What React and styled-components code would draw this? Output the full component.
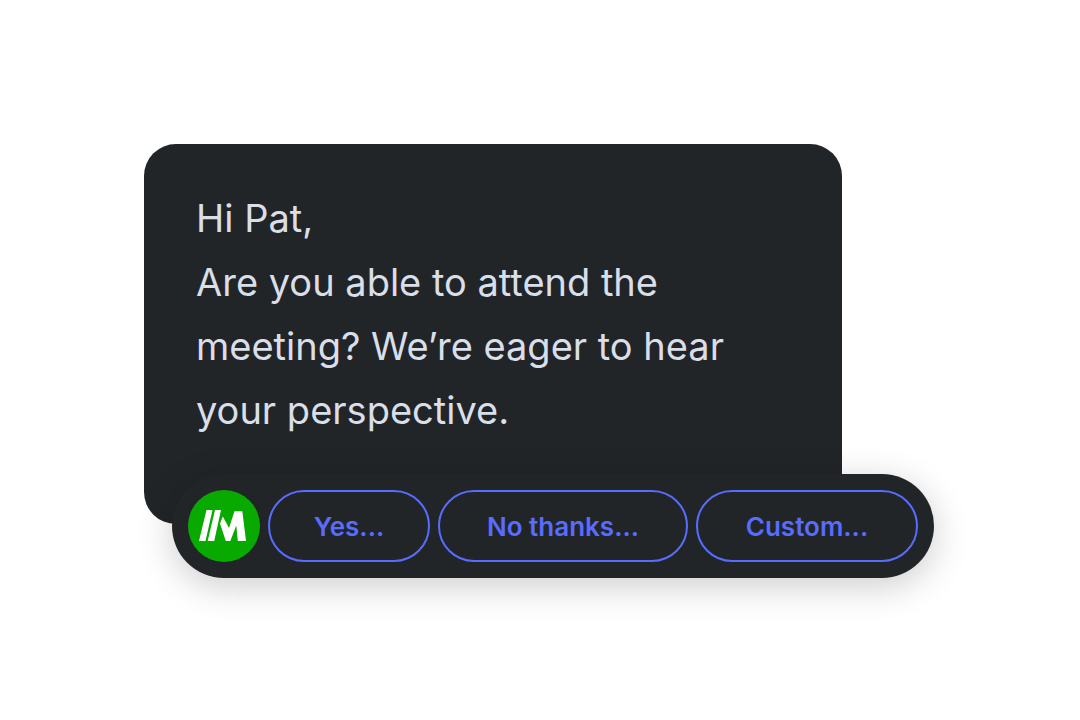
import React from 'react'
import styled, { createGlobalStyle } from 'styled-components'

const GlobalStyle = createGlobalStyle`
  * {
    box-sizing: border-box;
  }

  body {
    margin: 0;
    background: #ffffff;
    font-family: Inter, "Liberation Sans", sans-serif;
  }
`;

const Container = styled.main`
  padding: 144px;
`;

const Message = styled.section`
  min-height: 380px;
  margin-right: 94px;
  padding: 42px 52px;
  border-radius: 32px;
  background: #222528;
  color: #d9dfe9;
`;

const Paragraph = styled.p`
  margin: 0;
  font-size: 38px;
  font-weight: 400;
  line-height: 64px;
`;

const ReplyBar = styled.div`
  position: relative;
  display: flex;
  gap: 8px;
  margin: -50px 2px 0 28px;
  padding: 16px;
  border-radius: 52px;
  background: #222528;
  box-shadow: 0 8px 36px rgba(0, 0, 0, 0.2);
`;

const Logo = styled.svg`
  flex: none;
  width: 72px;
  height: 72px;
`;

const ReplyButton = styled.button`
  flex: ${(props) => props.$grow} 1 0;
  height: 72px;
  padding: 2px 0 0;
  border: 2px solid #586cff;
  border-radius: 36px;
  background: transparent;
  color: #586cff;
  font-family: inherit;
  font-size: 26px;
  font-weight: 600;
  line-height: 36px;
  white-space: nowrap;
  cursor: pointer;
`;

const replies = [
  { label: "Yes...", grow: 158 },
  { label: "No thanks...", grow: 246 },
  { label: "Custom...", grow: 218 },
];

const App = () => {
  return (
    <>
      <GlobalStyle/>
      <Container>
        <Message>
          <Paragraph>Hi Pat,</Paragraph>
          <Paragraph>
            Are you able to attend the meeting? We’re eager to hear your perspective.
          </Paragraph>
        </Message>
        <ReplyBar>
          <Logo viewBox="0 0 72 72" aria-hidden="true">
            <circle cx="36" cy="36" r="36" fill="#09aa00"/>
            <g fill="#ffffff">
              <path d="M18.500 20H24.500L17.500 51H11Z"/>
              <path d="M27 20H33L26.200 51H19.700Z"/>
              <path d="M34.800 26.500L41 38L46.500 21.300H54.300L58 51H49.800L48.300 35.500L42.300 51H37.800L32 33.500Z"/>
            </g>
          </Logo>
          {replies.map((reply) => (
            <ReplyButton key={reply.label} type="button" $grow={reply.grow}>
              {reply.label}
            </ReplyButton>
          ))}
        </ReplyBar>
      </Container>
    </>
  );
};

export default App;
